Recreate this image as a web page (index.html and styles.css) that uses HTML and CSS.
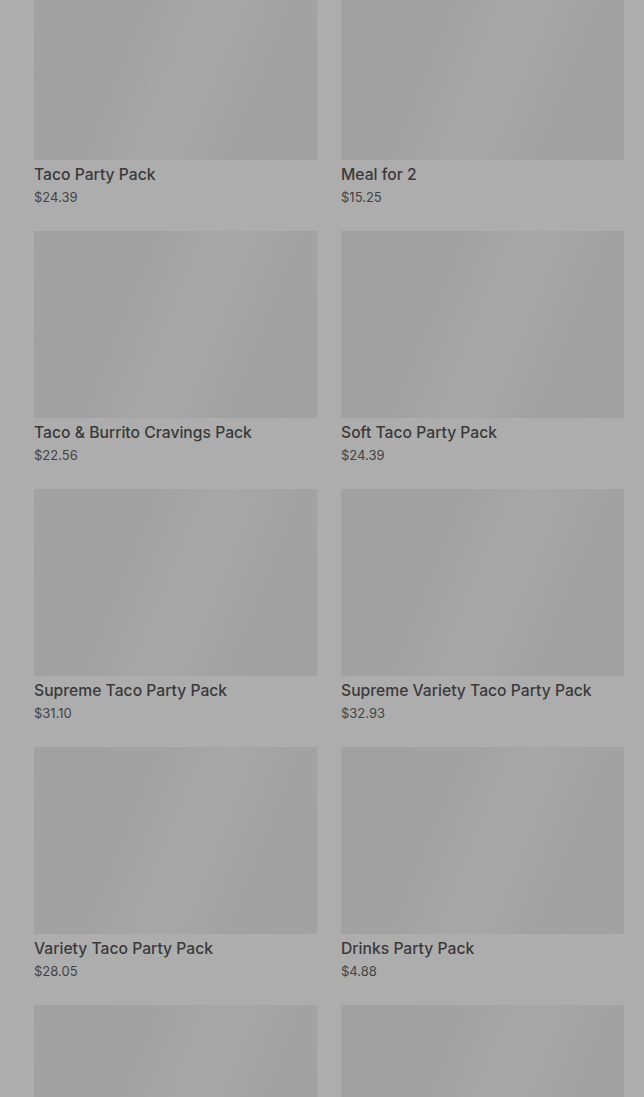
FILE: index.html
```html
<!DOCTYPE html>
<html lang="en">
<head>
<meta charset="utf-8">
<title>Party Packs</title>
<link rel="stylesheet" href="styles.css">
</head>
<body>
<main class="grid">
  <article class="card"><div class="thumb"></div><h3 class="name">Taco Party Pack</h3><p class="price">$24.39</p></article>
  <article class="card"><div class="thumb"></div><h3 class="name">Meal for 2</h3><p class="price">$15.25</p></article>
  <article class="card"><div class="thumb"></div><h3 class="name">Taco &amp; Burrito Cravings Pack</h3><p class="price">$22.56</p></article>
  <article class="card"><div class="thumb"></div><h3 class="name">Soft Taco Party Pack</h3><p class="price">$24.39</p></article>
  <article class="card"><div class="thumb"></div><h3 class="name">Supreme Taco Party Pack</h3><p class="price">$31.10</p></article>
  <article class="card"><div class="thumb"></div><h3 class="name">Supreme Variety Taco Party Pack</h3><p class="price">$32.93</p></article>
  <article class="card"><div class="thumb"></div><h3 class="name">Variety Taco Party Pack</h3><p class="price">$28.05</p></article>
  <article class="card"><div class="thumb"></div><h3 class="name">Drinks Party Pack</h3><p class="price">$4.88</p></article>
  <article class="card"><div class="thumb"></div></article>
  <article class="card"><div class="thumb"></div></article>
</main>
</body>
</html>
```
FILE: styles.css
```css
html, body {
  margin: 0;
  padding: 0;
  background: #adadad;
}
body {
  font-family: Inter, Roboto, "Liberation Sans", sans-serif;
  color: #3a3a3a;
}
.grid {
  display: grid;
  grid-template-columns: 283px 283px;
  column-gap: 24px;
  row-gap: 25px;
  padding: 0 20px 0 34px;
  margin-top: -27px;
}
.card {
  display: flex;
  flex-direction: column;
}
.thumb {
  height: 187px;
  background: linear-gradient(112deg, #a1a1a1 0%, #a2a2a2 35%, #a7a7a7 55%, #a2a2a2 75%, #a1a1a1 100%);
}
.name {
  margin: 5px 0 0;
  font-size: 15.7px;
  line-height: 20px;
  font-weight: 500;
  color: #3a3a3a;
}
.price {
  margin: 3px 0 0;
  font-size: 13px;
  line-height: 18px;
  font-weight: 400;
  color: #444444;
}
```
